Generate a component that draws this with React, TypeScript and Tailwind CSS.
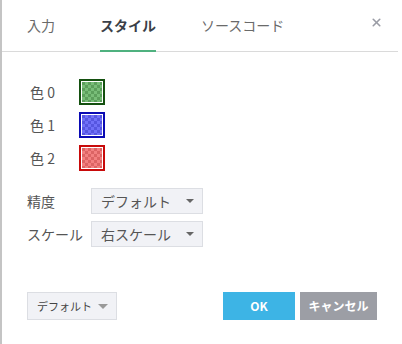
import { X } from 'lucide-react';

const tabs = [
  { name: '入力', active: false },
  { name: 'スタイル', active: true },
  { name: 'ソースコード', active: false },
];

const colors = [
  { label: '色 0', border: '#14500f', light: '#78bd78', dark: '#5c9f5c' },
  { label: '色 1', border: '#0a0ab4', light: '#7070f8', dark: '#5656e0' },
  { label: '色 2', border: '#c80a0a', light: '#f38080', dark: '#dc6464' },
];

const Swatch = ({ border, light, dark, id }: { border: string; light: string; dark: string; id: string }) => (
  <svg width="26" height="26" viewBox="0 0 26 26" className="block">
    <defs>
      <pattern id={id} width="6" height="6" patternUnits="userSpaceOnUse" x="3" y="3">
        <rect width="6" height="6" fill={light} />
        <rect width="3" height="3" fill={dark} />
        <rect x="3" y="3" width="3" height="3" fill={dark} />
      </pattern>
    </defs>
    <rect x="1" y="1" width="24" height="24" fill="#fff" stroke={border} strokeWidth="2" />
    <rect x="3" y="3" width="20" height="20" fill={`url(#${id})`} />
  </svg>
);

const Select = ({ value }: { value: string }) => (
  <div className="w-[112px] h-[26px] flex items-center justify-between pl-[9px] pr-[8px] bg-[#f1f2f6] border border-[#dcdee3] text-[14px] text-[#555]">
    <span>{value}</span>
    <span className="w-0 h-0 border-l-[4px] border-r-[4px] border-t-[4px] border-l-transparent border-r-transparent border-t-[#666]" />
  </div>
);

export default function App() {
  return (
    <div className="w-[402px] h-[344px] bg-white border-l-2 border-[#c4c4c4] font-['Noto_Sans_CJK_JP','Noto_Sans',sans-serif] flex flex-col">
      {/* Tabs */}
      <div className="h-[52px] mr-[4px] border-b border-[#dadada] flex items-stretch pl-[25px] pr-[15px]">
        <div className="flex gap-[45px]">
          {tabs.map((t) => (
            <div
              key={t.name}
              className={
                t.active
                  ? 'flex items-center pt-[1px] text-[14px] font-bold text-[#3b3f48] border-b-2 border-[#4fb17f] mb-[-1px]'
                  : 'flex items-center pb-[1px] text-[14px] text-[#6a6a6a]'
              }
            >
              {t.name}
            </div>
          ))}
        </div>
        <div className="ml-auto flex items-center pb-[7px] text-[#9a9ca5]">
          <X size={13} strokeWidth={3} />
        </div>
      </div>

      {/* Body */}
      <div className="flex-1 flex flex-col pt-[27px] pl-[25px]">
        <div className="flex flex-col gap-[7px] pl-[3px]">
          {colors.map((c, i) => (
            <div key={c.label} className="flex items-center h-[26px]">
              <span className="w-[49px] text-[14px] text-[#555]">{c.label}</span>
              <Swatch border={c.border} light={c.light} dark={c.dark} id={`chk${i}`} />
            </div>
          ))}
        </div>

        <div className="flex flex-col gap-[7px] mt-[17px]">
          <div className="flex items-center">
            <span className="w-[64px] text-[14px] text-[#555]">精度</span>
            <Select value="デフォルト" />
          </div>
          <div className="flex items-center">
            <span className="w-[64px] text-[14px] text-[#555]">スケール</span>
            <Select value="右スケール" />
          </div>
        </div>

        <div className="flex items-center mt-[45px] pr-[25px]">
          <div className="w-[90px] h-[28px] flex items-center justify-between pl-[9px] pr-[8px] bg-[#f1f2f6] border border-[#dcdee3] text-[11px] text-[#444]">
            <span>デフォルト</span>
            <span className="w-0 h-0 border-l-[5px] border-r-[5px] border-t-[5px] border-l-transparent border-r-transparent border-t-[#999]" />
          </div>
          <div className="ml-auto flex gap-[5px]">
            <button className="w-[72px] h-[28px] bg-[#3db4e5] text-white text-[12px] font-bold">OK</button>
            <button className="w-[77px] h-[28px] bg-[#9c9ea5] text-white text-[12px] font-bold">キャンセル</button>
          </div>
        </div>
      </div>
    </div>
  );
}
